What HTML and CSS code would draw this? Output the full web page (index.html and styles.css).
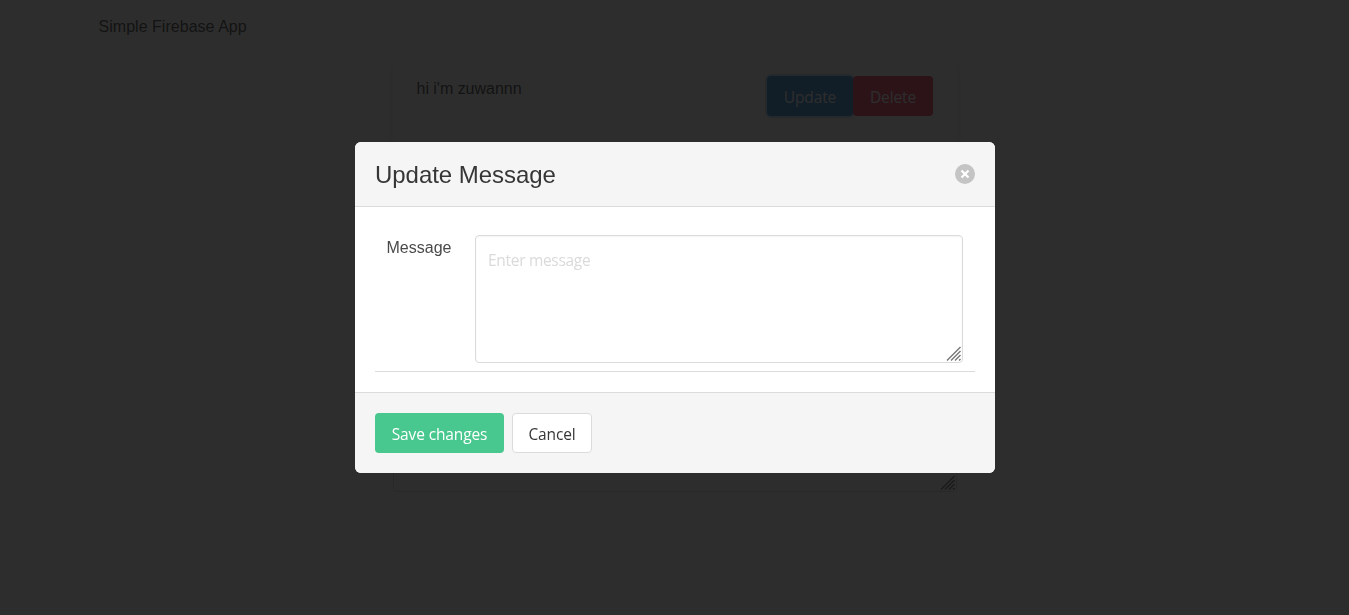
FILE: index.html
```html
<!DOCTYPE html>
<html lang="en">
<head>
<meta charset="utf-8">
<title>Simple Firebase App</title>
<link rel="stylesheet" href="styles.css">
</head>
<body>
<nav class="navbar"><span class="brand">Simple Firebase App</span></nav>
<main class="messages">
  <article class="card">
    <p class="card-text">hi i'm zuwannn</p>
    <div class="card-actions">
      <button class="button is-info is-focused">Update</button>
      <button class="button is-danger">Delete</button>
    </div>
  </article>
  <div class="page-textarea">
    <svg class="grip" viewBox="0 0 16 16"><path d="M1 14.5 14.5 1M5 14.5 14.5 5M9 14.5 14.5 9M13 14.5l1.5-1.5"/></svg>
  </div>
</main>
<div class="modal">
  <section class="modal-card">
    <header class="modal-head">
      <h1 class="modal-title">Update Message</h1>
      <button class="close" aria-label="close"><svg viewBox="0 0 20 20"><path d="M6.5 6.5l7 7M13.5 6.5l-7 7"/></svg></button>
    </header>
    <div class="modal-body">
      <div class="field">
        <label class="label">Message</label>
        <div class="textarea"><span class="placeholder">Enter message</span>
          <svg class="grip" viewBox="0 0 16 16"><path d="M1 14.5 14.5 1M5 14.5 14.5 5M9 14.5 14.5 9M13 14.5l1.5-1.5"/></svg>
        </div>
      </div>
    </div>
    <footer class="modal-foot">
      <button class="button is-success">Save changes</button>
      <button class="button is-plain">Cancel</button>
    </footer>
  </section>
</div>
</body>
</html>
```
FILE: styles.css
```css
* { box-sizing: border-box; }
html, body { height: 100%; margin: 0; overflow: hidden; }
body {
  background: #fff;
  color: #4a4a4a;
  font: 16px/24px "Liberation Sans", Arial, sans-serif;
}
.navbar { height: 52px; padding: 15px 98.5px 0; }
.brand { display: block; letter-spacing: .03px; }
.messages { width: 564px; margin-left: 393px; }
.card {
  display: flex;
  justify-content: space-between;
  height: 98px;
  padding: 24px 24px 0 23.5px;
  border-radius: 4px;
  box-shadow: 0 8px 16px -2px rgba(10, 10, 10, .1);
}
.card-text { margin: 1px 0 0; letter-spacing: -.02px; }
.card-actions { display: flex; align-items: flex-start; }
.button {
  display: flex;
  align-items: center;
  justify-content: center;
  height: 40px;
  padding: 2px 0 0;
  border: 0;
  border-radius: 4px;
  color: #fff;
  font: 15.5px/24px "Open Sans", "Noto Sans", sans-serif;
  letter-spacing: -.14px;
  white-space: nowrap;
}
.is-info { width: 86px; background: #3e8ed0; }
.is-focused { box-shadow: 0 0 0 2px rgba(62, 142, 208, .25); }
.is-danger { width: 80px; background: #f14668; }
.is-success { width: 129px; background: #48c78e; }
.is-plain { width: 80px; border: 1px solid #dbdbdb; background: #fff; color: #363636; }
.page-textarea {
  position: relative;
  height: 312px;
  margin-top: 30px;
  border: 1px solid #dbdbdb;
  border-radius: 4px;
}
.grip {
  position: absolute;
  right: 0;
  bottom: 0;
  width: 16px;
  height: 16px;
  fill: none;
  stroke: #777;
  stroke-width: 1.4;
}
.modal {
  position: fixed;
  inset: 0;
  display: flex;
  align-items: center;
  justify-content: center;
  background: rgba(10, 10, 10, .86);
}
.modal-card {
  width: 640px;
  height: 331px;
  margin-left: 1px;
  border-radius: 6px;
  background: #fff;
  overflow: hidden;
}
.modal-head {
  display: flex;
  align-items: center;
  justify-content: space-between;
  height: 65px;
  padding: 0 20px;
  border-bottom: 1px solid #dbdbdb;
  background: #f5f5f5;
}
.modal-title {
  margin: 0;
  padding-top: 2px;
  color: #363636;
  font-size: 24px;
  font-weight: 400;
  line-height: 24px;
  letter-spacing: -.04px;
}
.close { width: 20px; height: 20px; padding: 0; border: 0; border-radius: 50%; background: #c4c4c4; }
.close svg { display: block; width: 20px; height: 20px; fill: none; stroke: #fff; stroke-width: 2.2; }
.modal-body { height: 185px; padding: 20px; }
.field {
  display: flex;
  height: 145px;
  padding: 8px 12px 0 11.5px;
  border-bottom: 1px solid #dbdbdb;
}
.label { width: 88.5px; padding-top: 1px; }
.textarea {
  position: relative;
  width: 488px;
  height: 128px;
  padding: 12px;
  border: 1px solid #dbdbdb;
  border-radius: 4px;
  box-shadow: inset 0 1px 2px rgba(10, 10, 10, .05);
}
.placeholder {
  display: block;
  color: #dadada;
  font: 15.5px/24px "Open Sans", "Noto Sans", sans-serif;
  letter-spacing: -.3px;
}
.modal-foot {
  display: flex;
  gap: 8px;
  height: 81px;
  padding: 20px;
  border-top: 1px solid #dbdbdb;
  background: #f5f5f5;
}
```
